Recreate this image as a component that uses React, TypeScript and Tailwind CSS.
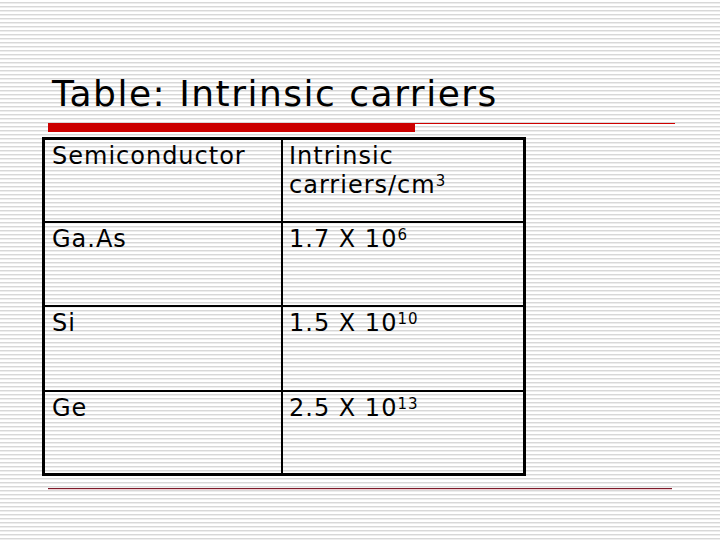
const rows = [
  { name: 'Ga.As', base: '1.7 X 10', exp: '6', h: 'h-[84px]' },
  { name: 'Si', base: '1.5 X 10', exp: '10', h: 'h-[85px]' },
  { name: 'Ge', base: '2.5 X 10', exp: '13', h: 'h-[83px]' },
]

export default function App() {
  return (
    <div className="w-[720px] h-[540px] overflow-hidden bg-white bg-[repeating-linear-gradient(to_bottom,#ffffff_0px,#ffffff_2px,#d8d8d8_2px,#d8d8d8_3px,#ededed_3px,#ededed_4px)] pt-[76px] font-['DejaVu_Sans',Verdana,sans-serif] text-black">
      <h1 className="ml-[52px] h-[36px] text-[36px] leading-none font-normal tracking-[1.5px] whitespace-nowrap">
        Table: Intrinsic carriers
      </h1>

      <div className="mt-[11px] ml-[48px] flex items-start">
        <div className="w-[367px] h-[9px] bg-[#cc0000]" />
        <div className="w-[260px] h-px bg-[#d00000]" />
      </div>

      <div className="mt-[5px] ml-[42px] w-[484px] border-[3px] border-black text-[24px] leading-[29px] tracking-[1px]">
        <div className="flex h-[81px]">
          <div className="w-[238px] border-r-2 border-black pl-[7px] pt-[2px]">Semiconductor</div>
          <div className="flex-1 pl-[6px] pt-[2px]">
            Intrinsic
            <br />
            carriers/cm<sup className="text-[15px] -top-[7px]">3</sup>
          </div>
        </div>
        {rows.map((r) => (
          <div key={r.name} className={`flex border-t-2 border-black ${r.h}`}>
            <div className="w-[238px] border-r-2 border-black pl-[7px] pt-[2px]">{r.name}</div>
            <div className="flex-1 pl-[6px] pt-[2px] whitespace-nowrap">
              {r.base}
              <sup className="text-[15px] -top-[7px]">{r.exp}</sup>
            </div>
          </div>
        ))}
      </div>

      <div className="mt-[12px] ml-[48px] w-[624px] h-px bg-[#7d1a2a] shadow-[0_1px_0_#f0d0d4]" />
    </div>
  )
}
